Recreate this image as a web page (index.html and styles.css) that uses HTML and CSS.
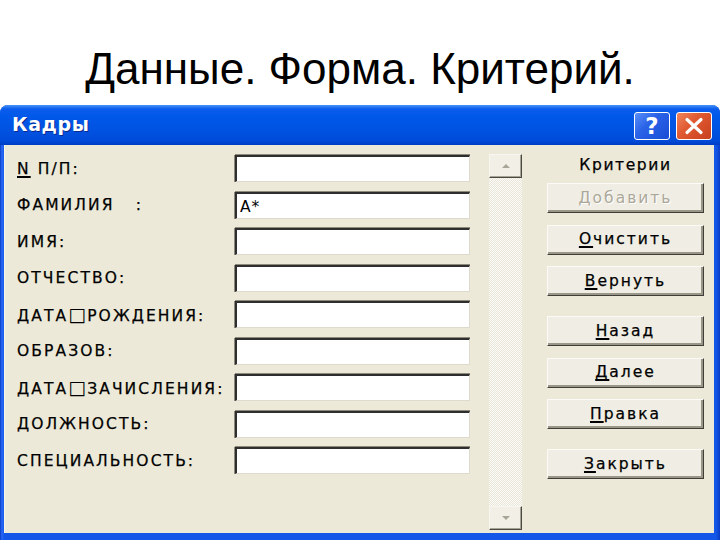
FILE: index.html
```html
<!DOCTYPE html>
<html lang="ru">
<head>
<meta charset="utf-8">
<title>Данные. Форма. Критерий.</title>
<link rel="stylesheet" href="styles.css">
</head>
<body>
<header class="slide-title"><h1>Данные. Форма. Критерий.</h1></header>
<div class="window">
  <div class="titlebar">
    <span class="caption">Кадры</span>
    <div class="caption-buttons">
      <span class="cbtn help">?</span>
      <span class="cbtn close"><svg width="22" height="18" viewBox="0 0 22 18"><path d="M4 2.5 L18 15.5 M18 2.5 L4 15.5" stroke="#fff" stroke-width="3.2" stroke-linecap="round"/></svg></span>
    </div>
  </div>
  <div class="client">
    <div class="fields">
      <span class="label"><u>N</u> П/П:</span><span class="input"></span>
      <span class="label">ФАМИЛИЯ   :</span><span class="input">А*</span>
      <span class="label">ИМЯ:</span><span class="input"></span>
      <span class="label">ОТЧЕСТВО:</span><span class="input"></span>
      <span class="label">ДАТА<span class="box">□</span>РОЖДЕНИЯ:</span><span class="input"></span>
      <span class="label">ОБРАЗОВ:</span><span class="input"></span>
      <span class="label">ДАТА<span class="box">□</span>ЗАЧИСЛЕНИЯ:</span><span class="input"></span>
      <span class="label">ДОЛЖНОСТЬ:</span><span class="input"></span>
      <span class="label">СПЕЦИАЛЬНОСТЬ:</span><span class="input"></span>
    </div>
    <div class="scrollbar">
      <div class="sbtn"><span class="tri-up"></span></div>
      <div class="track"></div>
      <div class="sbtn"><span class="tri-down"></span></div>
    </div>
    <div class="actions">
      <div class="crit">Критерии</div>
      <div class="group">
        <div class="btn disabled">Добавить</div>
        <div class="btn"><u>О</u>чистить</div>
        <div class="btn"><u>В</u>ернуть</div>
      </div>
      <div class="group">
        <div class="btn"><u>Н</u>азад</div>
        <div class="btn"><u>Д</u>алее</div>
        <div class="btn"><u>П</u>равка</div>
      </div>
      <div class="group">
        <div class="btn"><u>З</u>акрыть</div>
      </div>
    </div>
  </div>
</div>
</body>
</html>
```
FILE: styles.css
```css
html, body {
  margin: 0;
  padding: 0;
}
body {
  width: 720px;
  height: 540px;
  overflow: hidden;
  background: #fff;
  font-family: "DejaVu Sans", sans-serif;
}
.slide-title {
  height: 105px;
  box-sizing: border-box;
  padding-top: 47px;
  text-align: center;
}
.slide-title h1 {
  margin: 0;
  font: 400 44px/44px "Liberation Sans", Arial, sans-serif;
  color: #000;
}
.window {
  height: 435px;
  display: flex;
  flex-direction: column;
  background: linear-gradient(90deg, #0a3cc4 0, #2a6af8 2px, #1456e8 4px, #1456e8 calc(100% - 4px), #0a3cc4 100%);
  border-radius: 8px 8px 0 0;
}
.titlebar {
  height: 40px;
  flex: none;
  display: flex;
  align-items: center;
  padding: 0 8px 0 12px;
  border-radius: 8px 8px 0 0;
  background: linear-gradient(#4a93f8 0, #0a5cec 4px, #0058e8 12px, #0053e2 60%, #004ad8 90%, #003cc0 100%);
}
.caption {
  flex: 1;
  color: #fff;
  font: bold 19px "DejaVu Sans", sans-serif;
  letter-spacing: 0.6px;
  text-shadow: 1px 1px 0 #0a2a90;
  margin-top: -2px;
}
.caption-buttons {
  display: flex;
  gap: 6px;
  align-self: flex-start;
  margin-top: 7px;
}
.cbtn {
  width: 36px;
  height: 28px;
  box-sizing: border-box;
  border: 1px solid #fff;
  border-radius: 3px;
  display: flex;
  align-items: center;
  justify-content: center;
}
.help {
  background: linear-gradient(135deg, #5a8ff8 0, #2a62e8 40%, #1a4cd6 100%);
  color: #fff;
  font: bold 23px "DejaVu Sans", sans-serif;
}
.close {
  background: linear-gradient(135deg, #f0855e 0, #e05a32 40%, #c8401e 100%);
}
.client {
  flex: 1;
  margin: 0 6px 7px 4px;
  display: flex;
  align-items: flex-start;
  background: #ece9d8;
  border-left: 1px solid #f6f5ee;
  box-sizing: border-box;
}
.fields {
  display: grid;
  grid-template-columns: 218px 235px;
  grid-auto-rows: 27px;
  row-gap: 9.5px;
  padding: 10px 0 0 12px;
}
.label {
  align-self: center;
  font-size: 15.5px;
  letter-spacing: 2.1px;
  white-space: pre;
  color: #000;
  -webkit-text-stroke: 0.25px #000;
}
.label .box {
  font-size: 19px;
  line-height: 1;
  letter-spacing: 1px;
  -webkit-text-stroke: 0;
}
.label u, .btn u {
  text-decoration-thickness: 1.5px;
  text-underline-offset: 2px;
}
.input {
  box-sizing: border-box;
  background: #fff;
  border-style: solid;
  border-width: 2px 1px 1px 2px;
  border-color: #2e2e2e #dedbce #dedbce #2e2e2e;
  box-shadow: 0 -1px 0 #8d8a7c, -1px 0 0 #8d8a7c;
  font-size: 15.5px;
  letter-spacing: 1px;
  padding: 4px 0 0 3px;
  color: #000;
}
.scrollbar {
  margin: 9px 0 0 19px;
  width: 33px;
  height: 376px;
  display: flex;
  flex-direction: column;
  background: repeating-conic-gradient(#fbfaf6 0 25%, #e9e6da 0 50%) 0 0 / 2px 2px;
}
.sbtn {
  flex: none;
  height: 24px;
  box-sizing: border-box;
  background: #f1efe6;
  border: 1px solid;
  border-color: #f7f6f0 #4a4943 #4a4943 #f7f6f0;
  box-shadow: inset -1px -1px 0 #a7a496;
  display: flex;
  align-items: center;
  justify-content: center;
}
.track {
  flex: 1;
}
.tri-up, .tri-down {
  width: 0;
  height: 0;
  border-left: 4px solid transparent;
  border-right: 4px solid transparent;
}
.tri-up {
  border-bottom: 4px solid #a9a699;
}
.tri-down {
  border-top: 4px solid #a9a699;
}
.actions {
  margin-left: 25px;
  width: 157px;
  padding-top: 6px;
  display: flex;
  flex-direction: column;
  gap: 20px;
}
.crit {
  height: 28px;
  line-height: 28px;
  text-align: center;
  font-size: 15.5px;
  letter-spacing: 1.6px;
  color: #000;
  -webkit-text-stroke: 0.25px #000;
  margin-bottom: -16px;
}
.group {
  display: flex;
  flex-direction: column;
  gap: 11.5px;
}
.btn {
  height: 30px;
  box-sizing: border-box;
  background: #efede4;
  border: 1px solid;
  border-color: #fbfaf6 #3f3e38 #3f3e38 #fbfaf6;
  box-shadow: inset -2px -2px 0 #9a9788;
  display: flex;
  align-items: center;
  justify-content: center;
  font-size: 15.5px;
  letter-spacing: 2px;
  color: #000;
  -webkit-text-stroke: 0.25px #000;
  padding-bottom: 1px;
}
.btn.disabled {
  color: #aca899;
  -webkit-text-stroke: 0;
  text-shadow: 1px 1px 0 #fff;
}
```
